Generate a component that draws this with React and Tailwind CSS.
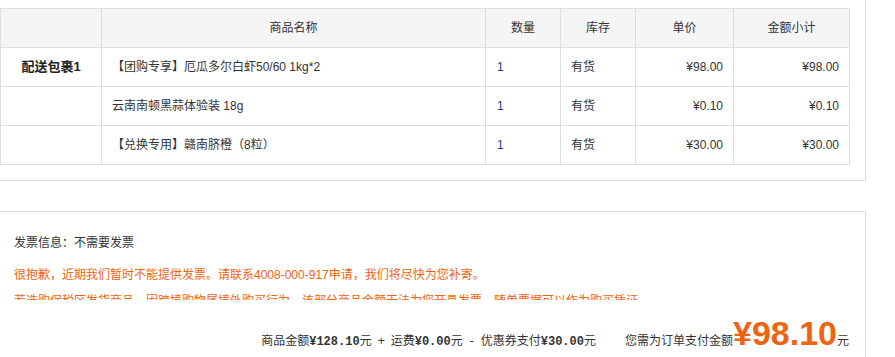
const rows = [
  { pkg: '配送包裹1', name: '【团购专享】厄瓜多尔白虾50/60 1kg*2', qty: 1, stock: '有货', price: '¥98.00', total: '¥98.00' },
  { pkg: '', name: '云南南顿黑蒜体验装 18g', qty: 1, stock: '有货', price: '¥0.10', total: '¥0.10' },
  { pkg: '', name: '【兑换专用】赣南脐橙（8粒）', qty: 1, stock: '有货', price: '¥30.00', total: '¥30.00' },
];

const heads = ['', '商品名称', '数量', '库存', '单价', '金额小计'];

const App = () => {
  return (
    <div className="w-[895px] h-[357px] overflow-hidden bg-white text-[12px] text-[#333] font-['Liberation_Sans','Noto_Sans_CJK_SC',sans-serif]">
      {/* Package table */}
      <div className="w-[866px] pt-[8px] pb-[15px] border-r border-b border-[#ddd]">
        <div className="w-[850px] grid grid-cols-[101px_384px_75px_75px_98px_116px] border-l border-t border-[#ddd]">
          {heads.map((h, i) => (
            <div key={i} className="h-[39px] bg-[#f5f5f5] border-r border-b border-[#ddd] flex items-center justify-center">
              {h}
            </div>
          ))}
          {rows.map((r, i) => (
            <div key={i} className="contents">
              <div className="h-[39px] border-r border-b border-[#ddd] flex items-center justify-center font-bold text-[13px] text-[#222]">
                {r.pkg}
              </div>
              <div className="h-[39px] border-r border-b border-[#ddd] flex items-center pl-[10px]">{r.name}</div>
              <div className="h-[39px] border-r border-b border-[#ddd] flex items-center pl-[11px] text-[#30307e]">{r.qty}</div>
              <div className="h-[39px] border-r border-b border-[#ddd] flex items-center pl-[10px]">{r.stock}</div>
              <div className="h-[39px] border-r border-b border-[#ddd] flex items-center justify-end pr-[10px]">{r.price}</div>
              <div className="h-[39px] border-r border-b border-[#ddd] flex items-center justify-end pr-[10px]">{r.total}</div>
            </div>
          ))}
        </div>
      </div>

      {/* Invoice + summary */}
      <div className="mt-[30px] w-[866px] h-[200px] border-t border-r border-[#ddd]">
        <div className="h-[88px] overflow-hidden pl-[14px] pt-[21px]">
          <p className="leading-[20px]">发票信息：不需要发票</p>
          <p className="mt-[12px] leading-[20px] text-[#ee6411]">
            很抱歉，近期我们暂时不能提供发票。请联系4008-000-917申请，我们将尽快为您补寄。
          </p>
          <p className="mt-[6px] leading-[20px] text-[#ee6411]">
            若选购保税区发货商品，因跨境购物属境外购买行为，该部分商品金额无法为您开具发票，随单票据可以作为购买凭证。
          </p>
        </div>

        <div className="mt-[15px] pr-[16px] flex justify-end items-baseline leading-[36px]">
          <span>
            商品金额<b className="font-['Liberation_Mono',monospace]">¥128.10</b>元
            <span className="mx-[6px]">+</span>
            运费<b className="font-['Liberation_Mono',monospace]">¥0.00</b>元
            <span className="mx-[7px]">-</span>
            优惠券支付<b className="font-['Liberation_Mono',monospace]">¥30.00</b>元
          </span>
          <span className="ml-[29px]">您需为订单支付金额</span>
          <span className="text-[34px] font-bold text-[#ee6411] font-['Liberation_Sans',sans-serif]">¥98.10</span>
          <span>元</span>
        </div>
      </div>
    </div>
  );
};

export default App;
